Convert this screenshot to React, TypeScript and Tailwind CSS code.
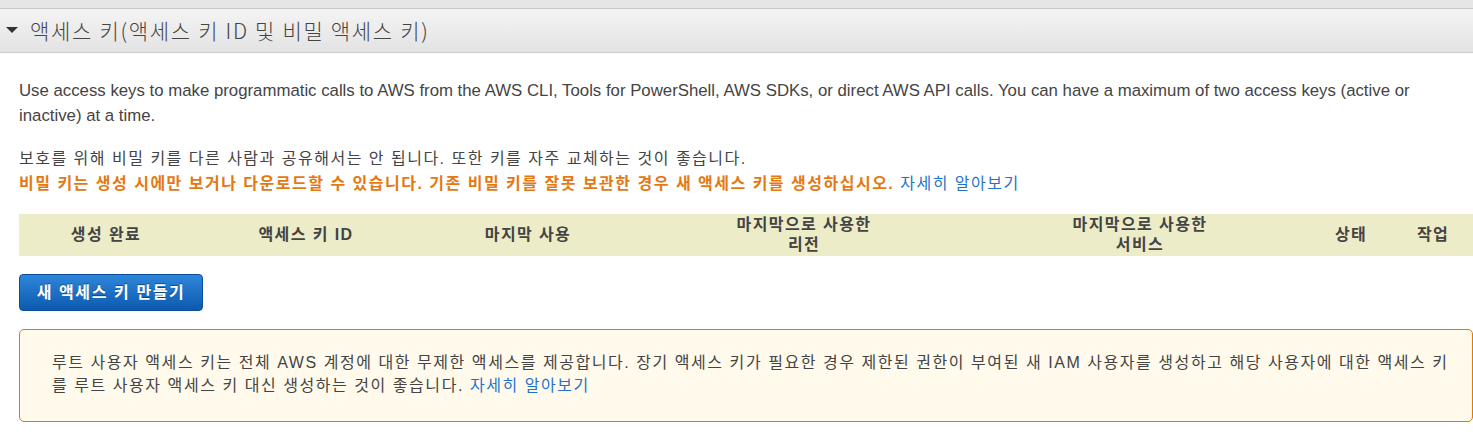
import React from "react";

export default function App() {
  const cols = [
    { t: "생성 완료", w: "w-[174px]" },
    { t: "액세스 키 ID", w: "w-[226px]" },
    { t: "마지막 사용", w: "w-[218px]" },
    { t: "마지막으로 사용한\n리전", w: "w-[334px]" },
    { t: "마지막으로 사용한\n서비스", w: "w-[338px]" },
    { t: "상태", w: "w-[84px]" },
    { t: "작업", w: "flex-1" },
  ];
  return (
    <div className="min-h-[437px] bg-white text-[#444] font-['Liberation_Sans','Noto_Sans_CJK_KR',sans-serif]">
      <div className="h-[9px] bg-[#e6e6e6] border-b border-[#c8c8c8]" />
      <div className="h-[44px] flex items-center bg-gradient-to-b from-[#f4f4f4] to-[#e3e3e3] border-b border-[#cccccc]">
        <svg width="12" height="7" viewBox="0 0 12 7" className="ml-[6px] mr-[12px]">
          <path d="M0 0 L12 0 L6 6 Z" fill="#333" />
        </svg>
        <span className="text-[21px] tracking-[1.7px] text-[#444] font-['Noto_Sans_CJK_KR',sans-serif] font-light leading-none">
          액세스 키(액세스 키 ID 및 비밀 액세스 키)
        </span>
      </div>
      <div className="pl-[19px] pt-[25px]">
        <p className="text-[16.8px] leading-[25px]">
          Use access keys to make programmatic calls to AWS from the AWS CLI, Tools for PowerShell, AWS SDKs, or direct AWS API calls. You can have a maximum of two access keys (active or inactive) at a time.
        </p>
        <p className="mt-[18px] text-[16px] leading-[25px] tracking-[1.5px]">
          보호를 위해 비밀 키를 다른 사람과 공유해서는 안 됩니다. 또한 키를 자주 교체하는 것이 좋습니다.
          <br />
          <span className="font-bold text-[#e47911]">
            비밀 키는 생성 시에만 보거나 다운로드할 수 있습니다. 기존 비밀 키를 잘못 보관한 경우 새 액세스 키를 생성하십시오.
          </span>{" "}
          <span className="text-[#1f74c9]">자세히 알아보기</span>
        </p>
        <div className="mt-[18px] h-[42px] flex bg-[#edecc9]">
          {cols.map((c, i) => (
            <div
              key={i}
              className={`${c.w} flex items-center justify-center text-center font-bold text-[16px] leading-[20px] tracking-[1.4px] whitespace-pre-line`}
            >
              {c.t}
            </div>
          ))}
        </div>
        <button className="mt-[18px] h-[37px] w-[184px] rounded-[4px] border border-[#0b4f9c] bg-gradient-to-b from-[#2d86da] to-[#0c5aae] text-white font-bold text-[16px] tracking-[1.6px] [text-shadow:0_-1px_0_rgba(0,0,0,0.4)]">
          새 액세스 키 만들기
        </button>
        <div className="mt-[18px] rounded-[5px] border border-[#e07b00] bg-[#fffaeb] pl-[32px] pr-[20px] pt-[21px] pb-[24px] text-[16px] leading-[23px] tracking-[1.55px] break-all">
          루트 사용자 액세스 키는 전체 AWS 계정에 대한 무제한 액세스를 제공합니다. 장기 액세스 키가 필요한 경우 제한된 권한이 부여된 새 IAM 사용자를 생성하고 해당 사용자에 대한 액세스 키를 루트 사용자 액세스 키 대신 생성하는 것이 좋습니다.{" "}
          <span className="text-[#1f74c9]">자세히 알아보기</span>
        </div>
      </div>
    </div>
  );
}
